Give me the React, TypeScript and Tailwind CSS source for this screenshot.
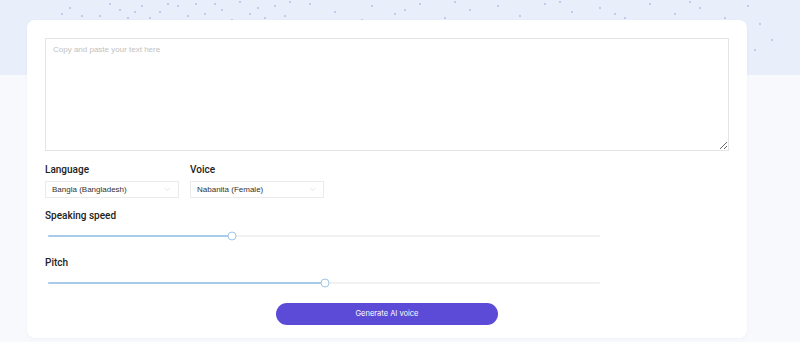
import { ChevronDown } from "lucide-react";

const dots = [
  [62, 14], [90, 22], [120, 10], [150, 18], [178, 6], [205, 14], [232, 20], [258, 8], [285, 16],
  [310, 4], [335, 12], [362, 20], [372, 6], [395, 14], [420, 4], [445, 18], [470, 10], [498, 6],
  [520, 16], [545, 4], [572, 12], [600, 8], [625, 18], [650, 4], [675, 14], [700, 8], [725, 18],
  [748, 6], [760, 24], [772, 40], [755, 50], [110, 4], [240, 2], [290, 2], [405, 10], [455, 2],
  [560, 2], [615, 14], [690, 2], [100, 16], [135, 12], [168, 4], [215, 4], [250, 14], [275, 6],
  [70, 8], [82, 16], [128, 18], [142, 6], [160, 12], [188, 16], [196, 4], [222, 10], [265, 18],
];

function Slider({ value }: { value: number }) {
  return (
    <div className="ml-[3px] flex h-[26px] w-[552px] items-center">
      <div className="relative h-[2px] w-full rounded-full bg-[#f0f1f3]">
        <div
          className="absolute left-0 top-0 h-[2px] rounded-full bg-[#a8cbea]"
          style={{ width: `${value}%` }}
        />
        <div
          className="absolute top-1/2 h-[9px] w-[9px] -translate-x-1/2 -translate-y-1/2 rounded-full border-[1.5px] border-[#9fc5e8] bg-white"
          style={{ left: `${value}%` }}
        />
      </div>
    </div>
  );
}

function Select({ value }: { value: string }) {
  return (
    <div className="flex h-[17px] w-[134px] items-center justify-between border border-[#ebebeb] bg-white px-[6px] font-['Liberation_Sans',Arial,sans-serif] text-[8px] text-[#333]">
      <span>{value}</span>
      <ChevronDown size={9} strokeWidth={1.2} className="text-[#c4c4c4]" />
    </div>
  );
}

const label = "h-[14px] font-['Roboto',sans-serif] text-[10px] font-medium leading-[14px] text-[#222]";

export default function App() {
  return (
    <div className="relative h-[342px] w-[800px] overflow-hidden bg-[linear-gradient(to_bottom,#e9eefb_75px,#f8f9fd_75px)] pt-[20px]">
      {/* dotted pattern */}
      <svg className="absolute left-0 top-0" width="800" height="60">
        {dots.map(([x, y], i) => (
          <circle key={i} cx={x} cy={y} r={0.9} fill="#9a8fd6" opacity={0.6} />
        ))}
      </svg>

      <div className="relative ml-[27px] w-[720px] rounded-[8px] bg-white px-[18px] pb-[13px] pt-[18px] shadow-[0_1px_3px_rgba(120,120,180,0.06)]">
        <textarea
          className="block h-[113px] w-[684px] resize-y border border-[#e4e4e4] px-[7px] py-[5px] font-['Liberation_Sans',Arial,sans-serif] text-[8px] text-[#333] outline-none placeholder:text-[#c2c2c2]"
          placeholder="Copy and paste your text here"
        />

        <div className="mt-[12px] flex gap-[11px]">
          <div>
            <div className={label}>Language</div>
            <div className="mt-[4px]">
              <Select value="Bangla (Bangladesh)" />
            </div>
          </div>
          <div>
            <div className={label}>Voice</div>
            <div className="mt-[4px]">
              <Select value="Nabanita (Female)" />
            </div>
          </div>
        </div>

        <div className={`mt-[11px] ${label}`}>Speaking speed</div>
        <Slider value={33.3} />

        <div className={`mt-[7px] ${label}`}>Pitch</div>
        <Slider value={50.2} />

        <div className="mt-[7px] flex justify-center">
          <button className="h-[22px] w-[222px] rounded-full bg-[#5b4bd6] font-['Inter',sans-serif] text-[7.5px] text-white">
            Generate AI voice
          </button>
        </div>
      </div>
    </div>
  );
}
